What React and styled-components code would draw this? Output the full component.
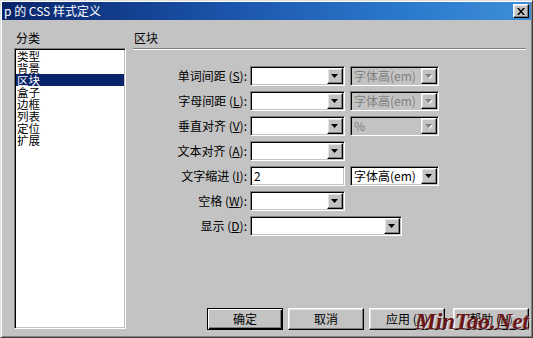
import React from 'react'
import styled, { createGlobalStyle, css } from 'styled-components'

const GlobalStyle = createGlobalStyle`
  html, body { margin: 0; padding: 0; background: #c3c3c3; overflow: hidden; }
  body {
    font-family: "Noto Sans CJK SC", "Liberation Sans", sans-serif;
    font-size: 12px;
    color: #000;
  }
`

const FACE = '#c3c3c3'

const sunken = css`
  border: 1px solid;
  border-color: #808080 #fff #fff #808080;
  box-shadow: inset 1px 1px 0 #000, inset -1px -1px 0 ${FACE};
`

const raised = css`
  border: 1px solid;
  border-color: #fff #000 #000 #fff;
  box-shadow: inset -1px -1px 0 #808080, inset 1px 1px 0 #e4e4e4;
`

const Window = styled.div`
  position: relative;
  width: 533px;
  height: 338px;
  box-sizing: border-box;
  background: ${FACE};
  border: 1px solid;
  border-color: #e0e0e0 #404040 #404040 #e0e0e0;
  box-shadow: inset 1px 1px 0 #fff, inset -1px -1px 0 #808080;
  padding: 1px;
  display: flex;
  flex-direction: column;
  overflow: hidden;
`

const TitleBar = styled.div`
  height: 18px;
  flex: none;
  display: flex;
  align-items: center;
  padding: 0 2px 0 2px;
  background: linear-gradient(to right, #0a246a 0%, #1a52a8 40%, #2a78cc 75%, #3f8ed8 100%);
  color: #fff;
  line-height: 18px;
`

const TitleText = styled.span`
  white-space: pre;
`

const CloseBtn = styled.div`
  margin-left: auto;
  width: 16px;
  height: 14px;
  box-sizing: border-box;
  background: ${FACE};
  ${raised};
  display: flex;
  align-items: center;
  justify-content: center;
`

const Body = styled.div`
  flex: 1;
  display: flex;
  padding-top: 11px;
  min-height: 0;
`

const Sidebar = styled.div`
  flex: none;
  width: 124px;
  box-sizing: border-box;
  padding: 0 0 7px 12px;
  display: flex;
  flex-direction: column;
`

const Caption = styled.div`
  line-height: 14px;
  height: 14px;
  padding-left: ${p => p.$indent || 0}px;
  white-space: nowrap;
`

const ListBox = styled.div`
  margin-top: 3px;
  flex: 1;
  box-sizing: border-box;
  background: #fff;
  ${sunken};
  padding: 1px;
`

const ListItem = styled.div`
  height: 12px;
  line-height: 12px;
  font-size: 11.5px;
  padding-left: 1px;
  white-space: nowrap;
  background: ${p => (p.$selected ? '#0a246a' : 'transparent')};
  color: ${p => (p.$selected ? '#fff' : '#000')};
`

const Main = styled.div`
  flex: 1;
  margin-left: 7px;
  padding-right: 2px;
  display: flex;
  flex-direction: column;
`

const Rule = styled.div`
  margin: 3px 3px 0 0;
  border-top: 1px solid #808080;
  border-bottom: 1px solid #fff;
`

const Form = styled.div`
  margin-top: 16px;
  display: grid;
  grid-template-columns: 114px auto;
  grid-auto-rows: 20px;
  column-gap: 3px;
  row-gap: 5px;
  align-items: center;
`

const Label = styled.div`
  justify-self: end;
  white-space: pre;
  line-height: 20px;
`

const Controls = styled.div`
  display: flex;
  gap: 5px;
  height: 20px;
`

const Field = styled.div`
  width: ${p => p.$w}px;
  height: 20px;
  box-sizing: border-box;
  ${sunken};
  background: ${p => (p.$disabled ? FACE : '#fff')};
  padding: 1px;
  display: flex;
`

const Value = styled.span`
  flex: 1;
  padding-left: 2px;
  line-height: 16px;
  white-space: pre;
  overflow: hidden;
  color: ${p => (p.$disabled ? '#808080' : '#000')};
`

const ArrowBtn = styled.div`
  width: 16px;
  height: 16px;
  box-sizing: border-box;
  flex: none;
  background: ${FACE};
  ${raised};
  display: flex;
  align-items: center;
  justify-content: center;
`

const Spacer = styled.div`
  flex: 1;
`

const ButtonRow = styled.div`
  display: flex;
  justify-content: flex-end;
  gap: 5px;
  margin-bottom: 6px;
`

const Button = styled.div`
  width: 76px;
  height: 22px;
  box-sizing: border-box;
  background: ${FACE};
  margin-left: ${p => (p.$spaced ? 3 : 0)}px;
  text-align: center;
  line-height: 20px;
  white-space: nowrap;
  ${p => p.$default
    ? css`
        border: 1px solid #000;
        box-shadow: inset 1px 1px 0 #fff, inset -1px -1px 0 #000, inset -2px -2px 0 #808080;
      `
    : raised};
`

const Watermark = styled.div`
  position: absolute;
  right: 3px;
  bottom: 1px;
  font-family: "Liberation Serif", serif;
  font-style: italic;
  font-weight: bold;
  font-size: 23px;
  line-height: 28px;
  color: #6a1616;
  text-shadow: 1px 1px 0 rgba(255, 255, 255, 0.55), -1px 0 0 rgba(120, 40, 40, 0.35);
  pointer-events: none;
`

function Arrow({ disabled }) {
  return (
    <svg width="8" height="5" viewBox="0 0 8 5">
      {disabled && <polygon points="1,1 8,1 4.5,5" fill="#fff" />}
      <polygon points="0,0 7,0 3.5,4" fill={disabled ? '#808080' : '#000'} />
    </svg>
  )
}

function Select({ w, value = '', disabled }) {
  return (
    <Field $w={w} $disabled={disabled}>
      <Value $disabled={disabled}>{value}</Value>
      <ArrowBtn>
        <Arrow disabled={disabled} />
      </ArrowBtn>
    </Field>
  )
}

const categories = ['类型', '背景', '区块', '盒子', '边框', '列表', '定位', '扩展']

export default function App() {
  return (
    <>
      <GlobalStyle />
      <Window>
        <TitleBar>
          <TitleText>p 的 CSS 样式定义</TitleText>
          <CloseBtn>
            <svg width="8" height="7" viewBox="0 0 8 7">
              <path d="M0 0 L2 0 L4 2.5 L6 0 L8 0 L5 3.5 L8 7 L6 7 L4 4.5 L2 7 L0 7 L3 3.5 Z" fill="#000" />
            </svg>
          </CloseBtn>
        </TitleBar>
        <Body>
          <Sidebar>
            <Caption $indent={2}>分类</Caption>
            <ListBox>
              {categories.map(c => (
                <ListItem key={c} $selected={c === '区块'}>{c}</ListItem>
              ))}
            </ListBox>
          </Sidebar>
          <Main>
            <Caption $indent={1}>区块</Caption>
            <Rule />
            <Form>
              <Label>单词间距 (<u>S</u>):</Label>
              <Controls>
                <Select w={95} />
                <Select w={89} value="字体高(em)" disabled />
              </Controls>

              <Label>字母间距 (<u>L</u>):</Label>
              <Controls>
                <Select w={95} />
                <Select w={89} value="字体高(em)" disabled />
              </Controls>

              <Label>垂直对齐 (<u>V</u>):</Label>
              <Controls>
                <Select w={95} />
                <Select w={89} value="%" disabled />
              </Controls>

              <Label>文本对齐 (<u>A</u>):</Label>
              <Controls>
                <Select w={95} />
              </Controls>

              <Label>文字缩进 (<u>I</u>):</Label>
              <Controls>
                <Field $w={95}>
                  <Value>2</Value>
                </Field>
                <Select w={89} value="字体高(em)" />
              </Controls>

              <Label>空格 (<u>W</u>):</Label>
              <Controls>
                <Select w={95} />
              </Controls>

              <Label>显示 (<u>D</u>):</Label>
              <Controls>
                <Select w={152} />
              </Controls>
            </Form>
            <Spacer />
            <ButtonRow>
              <Button $default>确定</Button>
              <Button>取消</Button>
              <Button>应用 (<u>A</u>)</Button>
              <Button $spaced>帮助 (<u>H</u>)</Button>
            </ButtonRow>
          </Main>
        </Body>
        <Watermark>MinTao.Net</Watermark>
      </Window>
    </>
  )
}
